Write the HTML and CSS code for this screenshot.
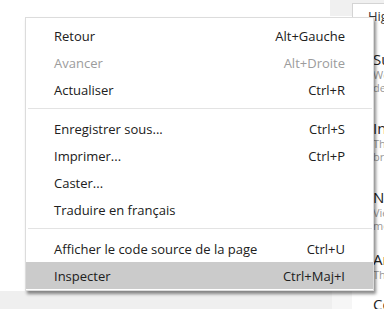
FILE: index.html
```html
<!DOCTYPE html>
<html lang="fr">
<head>
<meta charset="utf-8">
<title>Menu contextuel</title>
<link rel="stylesheet" href="styles.css">
</head>
<body>
<div class="page">
  <div class="doc">
    <div class="doc-main">
      <div class="canvas"></div>
      <div class="rail"><div class="rail-top"></div></div>
    </div>
    <div class="doc-foot"><div class="foot-fill"></div><div class="foot-rail"></div></div>
  </div>
  <aside class="panel">
    <div class="tabs"><div class="tab">Highlights</div></div>
    <div class="panel-body">
      <section class="sec">
        <h3 class="sec-title">Summary</h3>
        <p class="sec-desc">Web page summary</p>
        <p class="sec-desc">description</p>
      </section>
      <section class="sec">
        <h3 class="sec-title">Introduction</h3>
        <p class="sec-desc">The page</p>
        <p class="sec-desc">brief</p>
      </section>
      <section class="sec sec-tight">
        <h3 class="sec-title">News</h3>
        <p class="sec-desc">View</p>
        <p class="sec-desc">more</p>
      </section>
      <section class="sec sec-last">
        <h3 class="sec-title">Articles</h3>
        <p class="sec-desc">The list</p>
      </section>
      <section class="sec">
        <h3 class="sec-title">Contact</h3>
      </section>
    </div>
  </aside>
</div>

<div class="menu" role="menu">
  <div class="item"><span class="label">Retour</span><span class="key">Alt+Gauche</span></div>
  <div class="item disabled"><span class="label">Avancer</span><span class="key">Alt+Droite</span></div>
  <div class="item"><span class="label">Actualiser</span><span class="key">Ctrl+R</span></div>
  <div class="sep"></div>
  <div class="item"><span class="label">Enregistrer sous...</span><span class="key">Ctrl+S</span></div>
  <div class="item"><span class="label">Imprimer...</span><span class="key">Ctrl+P</span></div>
  <div class="item"><span class="label">Caster...</span></div>
  <div class="item"><span class="label">Traduire en français</span></div>
  <div class="sep"></div>
  <div class="item"><span class="label">Afficher le code source de la page</span><span class="key">Ctrl+U</span></div>
  <div class="item active"><span class="label">Inspecter</span><span class="key">Ctrl+Maj+I</span></div>
</div>
</body>
</html>
```

FILE: styles.css
```css
* { box-sizing: border-box; }
html, body {
  margin: 0;
  padding: 0;
  width: 384px;
  height: 309px;
  overflow: hidden;
  background: #ffffff;
  font-family: "Open Sans", "Noto Sans", "DejaVu Sans", sans-serif;
}
body { position: relative; }

.page {
  display: flex;
  width: 384px;
  height: 309px;
}

.doc {
  width: 352px;
  display: flex;
  flex-direction: column;
}
.doc-main {
  flex: 1;
  display: flex;
}
.canvas {
  flex: 1;
  background: #ffffff;
}
.rail {
  width: 22px;
  background: #ffffff;
}
.rail-top {
  height: 16px;
  background: #f0f0f0;
}
.doc-foot {
  height: 18px;
  display: flex;
}
.foot-fill {
  flex: 1;
  background: #efefef;
}
.foot-rail {
  width: 20px;
  background: #f6f6f6;
}

.panel {
  width: 32px;
  display: flex;
  flex-direction: column;
  overflow: hidden;
}
.tabs {
  height: 30px;
  background: #f0f0f0;
  padding-top: 3px;
}
.tab {
  height: 27px;
  background: #ffffff;
  border-left: 1px solid #d4d4d4;
  border-top: 1px solid #d4d4d4;
  padding-left: 15px;
  padding-top: 3px;
  font-size: 13px;
  line-height: 18px;
  color: #333;
  white-space: nowrap;
}
.panel-body {
  padding: 19px 0 0 21px;
  white-space: nowrap;
}
.sec { margin-bottom: 24px; }
.sec-tight { margin-bottom: 17px; }
.sec-last { margin-bottom: 12px; }
.sec-title {
  margin: 0;
  font-size: 15px;
  font-weight: 400;
  line-height: 20px;
  color: #222;
}
.sec-desc {
  margin: 0;
  font-size: 11px;
  line-height: 12.5px;
  color: #999;
}

.menu {
  position: absolute;
  left: 25px;
  top: 17px;
  width: 349px;
  background: #ffffff;
  border: 1px solid #dcdcdc;
  box-shadow: 2px 3px 3px rgba(0, 0, 0, 0.45);
  padding: 4px 0 1px;
  font-size: 13px;
  color: #202020;
}
.item {
  height: 27px;
  display: flex;
  align-items: center;
  justify-content: space-between;
  padding: 0 28px 0 28px;
  white-space: nowrap;
}
.item.disabled { color: #9c9c9c; }
.item.active { background: #cbcbcb; }
.sep {
  height: 1px;
  margin: 5px 1px 6px 2px;
  background: #e3e3e3;
}
```
